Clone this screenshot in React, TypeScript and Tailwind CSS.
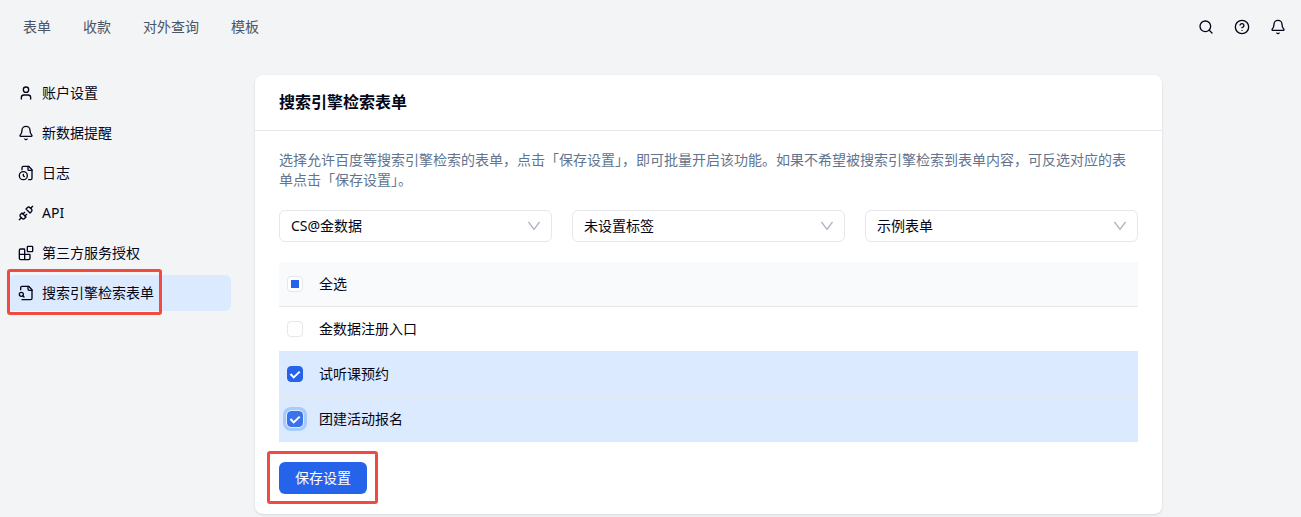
import { useState } from 'react';
import { Bell, Blocks, CircleHelp, Search, Unplug, User } from 'lucide-react';

const FileClock = () => (
    <svg width="16" height="16" viewBox="0 0 24 24" fill="none" stroke="currentColor" strokeWidth="2" strokeLinecap="round" strokeLinejoin="round">
        <path d="M16 22h3a2 2 0 0 0 2-2V7l-5-5H8a2 2 0 0 0-2 2v3" />
        <path d="M15 2v5a1 1 0 0 0 1 1h5" />
        <circle cx="8" cy="16" r="6" />
        <path d="M9.5 17.5 8 16.25V14" />
    </svg>
);

const FileSearch = () => (
    <svg width="16" height="16" viewBox="0 0 24 24" fill="none" stroke="currentColor" strokeWidth="2" strokeLinecap="round" strokeLinejoin="round">
        <path d="M6 22h13a2 2 0 0 0 2-2V7l-5-5H6a2 2 0 0 0-2 2v3" />
        <path d="M15 2v4a2 2 0 0 0 2 2h4" />
        <circle cx="5" cy="14" r="3" />
        <path d="m9 18-1.5-1.5" />
    </svg>
);

const topLinks = ['表单', '收款', '对外查询', '模板'];

const menu = [
    { label: '账户设置', icon: <User size={16} /> },
    { label: '新数据提醒', icon: <Bell size={16} /> },
    { label: '日志', icon: <FileClock /> },
    { label: 'API', icon: <Unplug size={16} /> },
    { label: '第三方服务授权', icon: <Blocks size={16} /> },
    { label: '搜索引擎检索表单', icon: <FileSearch />, active: true },
];

const filters = [
    { name: '所有者', value: 'CS@金数据' },
    { name: '标签', value: '未设置标签' },
    { name: '表单', value: '示例表单' },
];

const forms = ['金数据注册入口', '试听课预约', '团建活动报名'];

type CheckboxProps = {
    id: string;
    checked: boolean;
    partial?: boolean;
    halo?: boolean;
    onChange: () => void;
};

const Checkbox = ({ id, checked, partial = false, halo = false, onChange }: CheckboxProps) => (
    <span className="grid size-4 place-items-center">
        <input
            id={id}
            type="checkbox"
            checked={checked}
            ref={(el) => {
                if (el) el.indeterminate = partial;
            }}
            onChange={onChange}
            className={
                halo
                    ? 'col-start-1 row-start-1 size-4 appearance-none rounded border border-gray-200 bg-white ring-4 ring-[#a6cbff] outline-1 outline-blue-100 checked:border-[#3b73ec] checked:bg-[#3b73ec]'
                    : 'col-start-1 row-start-1 size-4 appearance-none rounded border border-gray-200 bg-white checked:border-[#2563eb] checked:bg-[#2563eb]'
            }
        />
        {partial && <span className="pointer-events-none col-start-1 row-start-1 size-2 bg-[#2563eb]" />}
        {checked && (
            <svg className="pointer-events-none col-start-1 row-start-1" width="16" height="16" viewBox="0 0 16 16" fill="none" stroke="white" strokeWidth="2">
                <path d="m3.5 8 3.2 3.4L12.7 5.6" />
            </svg>
        )}
    </span>
);

const App: React.FC = () => {
    const [selected, setSelected] = useState<string[]>(['试听课预约', '团建活动报名']);
    const all = selected.length === forms.length;

    const toggle = (name: string) =>
        setSelected((prev) => (prev.includes(name) ? prev.filter((n) => n !== name) : [...prev, name]));

    return (
        <div className="min-h-screen bg-gray-100 font-['Noto_Sans','Noto_Sans_CJK_SC',sans-serif] text-sm text-slate-950" lang="zh-CN">
            <header className="flex h-[54px] items-center justify-between pr-[15px] pl-[23px]">
                <nav className="flex gap-8">
                    {topLinks.map((label) => (
                        <a key={label} href="#" className="text-gray-600">
                            {label}
                        </a>
                    ))}
                </nav>
                <div className="flex gap-5">
                    <button type="button" aria-label="搜索"><Search size={16} /></button>
                    <button type="button" aria-label="帮助"><CircleHelp size={16} /></button>
                    <button type="button" aria-label="通知"><Bell size={16} /></button>
                </div>
            </header>

            <div className="flex pt-[21px]">
                <aside className="w-[255px] shrink-0 pr-6 pl-2">
                    <nav className="flex flex-col gap-1">
                        {menu.map(({ label, icon, active }) => (
                            <a
                                key={label}
                                href="#"
                                className={
                                    active
                                        ? 'relative flex h-9 items-center gap-2 rounded-md bg-blue-100 px-[10px]'
                                        : 'flex h-9 items-center gap-2 rounded-md px-[10px]'
                                }
                            >
                                {icon}
                                {label}
                                {active && (
                                    <span className="pointer-events-none absolute -top-[6px] -bottom-1 -left-px w-[155px] rounded-[3px] border-3 border-[#f04b41]" />
                                )}
                            </a>
                        ))}
                    </nav>
                </aside>

                <main className="mr-6 max-w-[907px] flex-1 rounded-lg bg-white shadow-sm">
                    <h1 className="flex h-14 items-center border-b border-gray-200 px-6 pb-0.5 text-base font-bold">
                        搜索引擎检索表单
                    </h1>
                    <div className="px-6 pt-[19px] pb-5">
                        <p className="leading-5 text-slate-500">
                            选择允许百度等搜索引擎检索的表单，点击「保存设置」，即可批量开启该功能。如果不希望被搜索引擎检索到表单内容，可反选对应的表单点击「保存设置」。
                        </p>

                        <div className="mt-5 grid grid-cols-3 gap-5">
                            {filters.map(({ name, value }) => (
                                <div key={name} className="grid items-center">
                                    <select
                                        aria-label={name}
                                        className="col-start-1 row-start-1 h-8 w-full appearance-none rounded-md border border-gray-200 bg-white px-[11px]"
                                    >
                                        <option>{value}</option>
                                    </select>
                                    <svg className="pointer-events-none col-start-1 row-start-1 mr-3 justify-self-end text-[#aeb6c2]" width="12" height="12" viewBox="0 0 12 12" fill="none" stroke="currentColor" strokeWidth="1.3">
                                        <path d="M.5 2 6 9.5 11.5 2" />
                                    </svg>
                                </div>
                            ))}
                        </div>

                        <table className="mt-5 w-full border-separate border-spacing-0 text-left">
                            <thead>
                                <tr className="bg-slate-50">
                                    <th className="h-[45px] w-10 border-b border-gray-200 pl-2">
                                        <Checkbox
                                            id="all"
                                            checked={all}
                                            partial={selected.length > 0 && !all}
                                            onChange={() => setSelected(all ? [] : forms)}
                                        />
                                    </th>
                                    <th className="border-b border-gray-200 font-normal">
                                        <label htmlFor="all">全选</label>
                                    </th>
                                </tr>
                            </thead>
                            <tbody>
                                {forms.map((name, i) => (
                                    <tr key={name} className={selected.includes(name) ? 'bg-blue-100' : 'bg-white'}>
                                        <td className="h-[45px] border-b border-gray-200 pl-2">
                                            <Checkbox
                                                id={`form-${i}`}
                                                checked={selected.includes(name)}
                                                halo={i === forms.length - 1}
                                                onChange={() => toggle(name)}
                                            />
                                        </td>
                                        <td className="border-b border-gray-200">
                                            <label htmlFor={`form-${i}`}>{name}</label>
                                        </td>
                                    </tr>
                                ))}
                            </tbody>
                        </table>

                        <div className="relative mt-5 w-fit">
                            <button type="button" className="block h-8 rounded-md bg-[#2563eb] px-4 text-white">
                                保存设置
                            </button>
                            <span className="pointer-events-none absolute -top-[11px] -right-[11px] -bottom-[10px] -left-3 rounded-[3px] border-3 border-[#f04b41]" />
                        </div>
                    </div>
                </main>
            </div>
        </div>
    );
};

export default App;
